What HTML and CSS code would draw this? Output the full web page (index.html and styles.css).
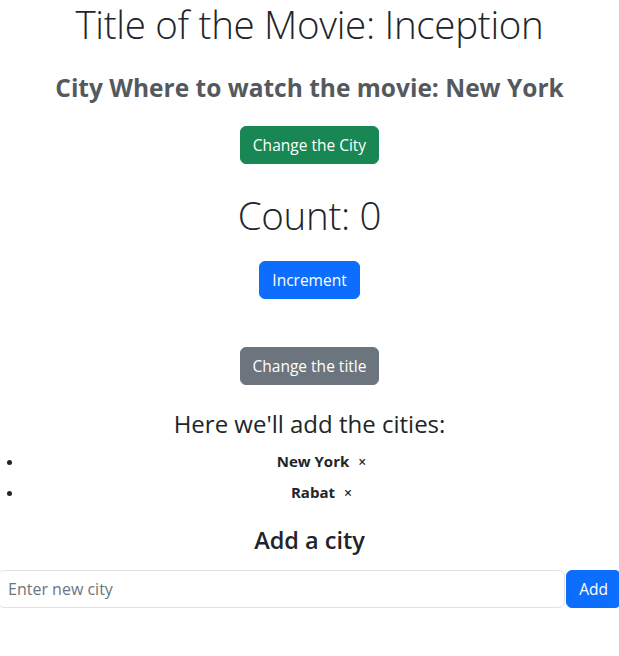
FILE: index.html
```html
<!DOCTYPE html>
<html lang="en">
<head>
<meta charset="utf-8">
<title>Movie</title>
<link rel="stylesheet" href="styles.css">
</head>
<body>
<div class="app">
  <h1 class="display title">Title of the Movie: Inception</h1>
  <h3 class="city">City Where to watch the movie: New York</h3>
  <button class="btn btn-success btn-city">Change the City</button>
  <h2 class="display count">Count: 0</h2>
  <button class="btn btn-primary btn-inc">Increment</button>
  <button class="btn btn-secondary btn-title">Change the title</button>
  <h4 class="cities-title">Here we'll add the cities:</h4>
  <ul class="cities">
    <li><strong>New York</strong><span class="remove">×</span></li>
    <li><strong>Rabat</strong><span class="remove">×</span></li>
  </ul>
  <h4 class="add-title">Add a city</h4>
  <form class="add-form">
    <input class="form-control" type="text" placeholder="Enter new city">
    <button class="btn btn-primary add-btn" type="button">Add</button>
  </form>
</div>
</body>
</html>
```
FILE: styles.css
```css
* { box-sizing: border-box; }
body {
  margin: 0;
  font-family: "Open Sans", "Noto Sans", sans-serif;
  font-size: 16px;
  line-height: 1.5;
  color: #212529;
  background: #fff;
}
.app { text-align: center; }
h1, h2, h3, h4 { margin: 0; }
.display {
  font-weight: 300;
  font-size: 38.5px;
  line-height: 48px;
  letter-spacing: -0.3px;
}
.city {
  margin-top: 25px;
  font-size: 24.5px;
  line-height: 30px;
  font-weight: 700;
  color: #54595e;
}
.btn {
  display: block;
  margin: 0 auto;
  font-family: inherit;
  font-size: 15.5px;
  line-height: 24px;
  padding: 6px 12px;
  border: 1px solid transparent;
  border-radius: 6px;
  color: #fff;
  cursor: pointer;
}
.btn-success { background: #198754; border-color: #198754; }
.btn-primary { background: #0d6efd; border-color: #0d6efd; }
.btn-secondary { background: #6c757d; border-color: #6c757d; }
.btn-city { margin-top: 23px; }
.count { margin-top: 27px; }
.btn-inc { margin-top: 22px; }
.btn-title { margin-top: 48px; }
.cities-title {
  margin-top: 24px;
  font-size: 24px;
  line-height: 29px;
  font-weight: 500;
}
.cities {
  margin: 8px 0 0;
  padding-left: 24px;
}
.cities li { line-height: 31px; font-size: 15px; }
.cities strong { font-weight: 700; }
.remove {
  display: inline-block;
  margin-left: 9px;
  font-size: 14px;
  font-weight: 600;
}
.add-title {
  margin-top: 18px;
  font-size: 23.5px;
  line-height: 29px;
  font-weight: 600;
}
.add-form {
  display: flex;
  margin: 15px -2px 0 -2px;
}
.form-control {
  flex: 1;
  font-family: inherit;
  font-size: 16px;
  line-height: 24px;
  padding: 6px 9px;
  border: 1px solid #dee2e6;
  border-radius: 6px;
  color: #212529;
}
.form-control::placeholder { color: #6c757d; }
.add-btn { margin: 0 0 0 1px; }
```
